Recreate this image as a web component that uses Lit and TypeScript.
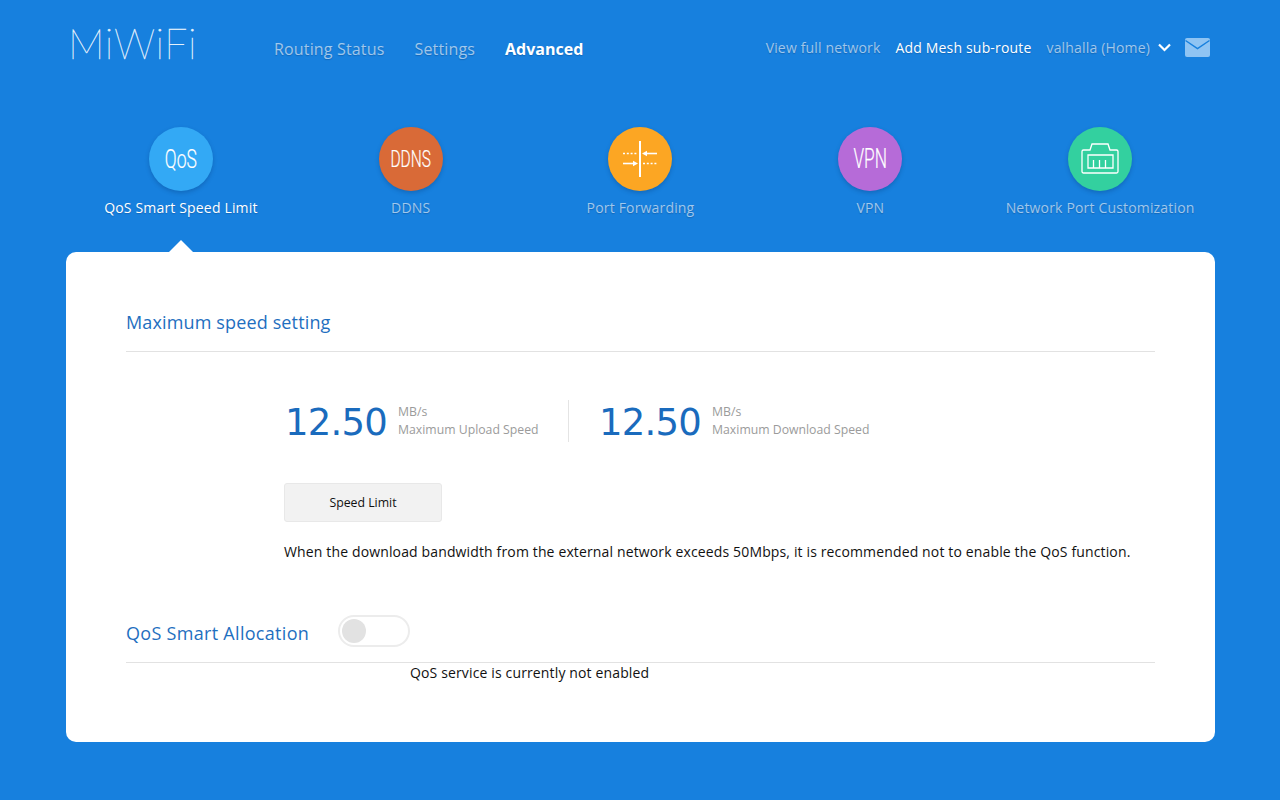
import { LitElement, html, css } from "lit";
import { customElement } from "lit/decorators.js";

const portIcon = html`<svg width="36" height="36" viewBox="0 0 36 36" fill="none" stroke="#fff" stroke-width="1.600">
  <path d="M18 0v36" stroke-width="2" />
  <path d="M1 12.500h15" stroke-dasharray="2 1.800" />
  <path d="M23 12.500h12" />
  <path d="M20 12.500l5-2.800v5.600z" fill="#fff" stroke="none" />
  <path d="M1 22.500h12" />
  <path d="M16 22.500l-5-2.800v5.600z" fill="#fff" stroke="none" />
  <path d="M21 22.500h15" stroke-dasharray="2 1.800" />
</svg>`;

const lanIcon = html`<svg width="38" height="32" viewBox="0 0 38 32" fill="none" stroke="#fff" stroke-width="1.300">
  <path d="M2.500 7h6.500l2-6h16l2 6h6.500a1.500 1.500 0 0 1 1.500 1.500v20a1.500 1.500 0 0 1-1.500 1.500h-33a1.500 1.500 0 0 1-1.500-1.500v-20a1.500 1.500 0 0 1 1.500-1.500z" />
  <path d="M7 12h25v13h-25z" />
  <path d="M12.500 25v-8M18.500 25v-8M24.500 25v-8" />
</svg>`;

const tabs = [
  { label: "QoS Smart Speed Limit", color: "#33a9f5", text: "QoS", active: true },
  { label: "DDNS", color: "#d96a37", text: "DDNS" },
  { label: "Port Forwarding", color: "#fca623", icon: portIcon },
  { label: "VPN", color: "#b66bd8", text: "VPN" },
  { label: "Network Port Customization", color: "#33d09f", icon: lanIcon },
];

@customElement("app-root")
export class AppRoot extends LitElement {
  static styles = css`
    :host {
      display: block;
      height: 800px;
      overflow: hidden;
      background: #1780de;
      font-family: "Open Sans", "Noto Sans", sans-serif;
      font-size: 14px;
      letter-spacing: 0.14px;
      color: #111;
    }
    .wrap {
      width: 1149px;
      margin-left: 66px;
    }
    .header {
      display: flex;
      align-items: center;
      height: 96px;
      padding-left: 5px;
      padding-right: 5px;
      text-shadow: 0 1px 1px rgba(0, 30, 80, 0.25);
    }
    .logo {
      width: 124px;
      font-family: "Lato", sans-serif;
      font-weight: 100;
      font-size: 41px;
      letter-spacing: 0.6px;
      color: #e4f1fc;
      -webkit-text-stroke: 0.35px #e4f1fc;
      text-shadow: none;
      line-height: 1;
      margin-top: -9px;
      margin-left: -3px;
    }
    .nav {
      display: flex;
      gap: 30px;
      margin-left: 82px;
      font-size: 16px;
      letter-spacing: 0.16px;
      color: rgba(255, 255, 255, 0.6);
      margin-top: 2px;
    }
    .nav .on {
      color: #fff;
      font-weight: 700;
      letter-spacing: 0;
    }
    .right {
      margin-left: auto;
      display: flex;
      align-items: center;
      font-size: 14px;
      letter-spacing: 0.17px;
      color: rgba(255, 255, 255, 0.6);
      margin-top: -2px;
    }
    .right .add {
      color: #fff;
      margin-left: 15px;
    }
    .right .home {
      margin-left: 15px;
    }
    .chev {
      margin-left: 8px;
    }
    .mail {
      margin-left: 14px;
    }
    .tabs {
      display: grid;
      grid-template-columns: repeat(5, 1fr);
      margin-top: 31px;
      height: 125px;
    }
    .tab {
      position: relative;
      display: flex;
      flex-direction: column;
      align-items: center;
      font-size: 14px;
      letter-spacing: 0.17px;
      color: rgba(255, 255, 255, 0.6);
      text-shadow: 0 1px 1px rgba(0, 30, 80, 0.25);
    }
    .tab.on {
      color: #fff;
    }
    .tab.on::after {
      content: "";
      position: absolute;
      bottom: 0;
      left: 50%;
      margin-left: -12px;
      border: 12px solid transparent;
      border-top: 0;
      border-bottom-color: #fff;
    }
    .circle {
      width: 64px;
      height: 64px;
      border-radius: 50%;
      display: flex;
      align-items: center;
      justify-content: center;
      box-shadow: 0 2px 4px rgba(0, 40, 90, 0.25);
      color: #fff;
      margin-bottom: 7px;
    }
    .badge {
      font-family: "Roboto", sans-serif;
      font-weight: 300;
      font-size: 25px;
      letter-spacing: 0;
      text-shadow: none;
      -webkit-text-stroke: 0.2px #fff;
      transform: scaleX(0.7);
      white-space: nowrap;
    }
    .badge.b-ddns {
      font-size: 23.5px;
      transform: scaleX(0.66);
    }
    .badge.b-vpn {
      font-size: 27px;
      transform: scaleX(0.64);
    }
    .card {
      background: #fff;
      border-radius: 10px;
      height: 490px;
      padding: 0 60px;
      box-sizing: border-box;
    }
    .title {
      font-size: 18px;
      color: #1f6fc0;
      line-height: 24px;
    }
    .head {
      padding-top: 58px;
      padding-bottom: 17px;
      border-bottom: 1px solid #e2e2e2;
    }
    .body {
      padding-left: 158px;
    }
    .speeds {
      display: flex;
      align-items: center;
      margin-top: 48px;
      height: 42px;
    }
    .speed {
      display: flex;
      align-items: center;
    }
    .num {
      font-family: "DejaVu Sans", sans-serif;
      font-size: 37px;
      letter-spacing: -0.8px;
      color: #1a6bbd;
      line-height: 42px;
      padding-top: 4px;
      margin-left: 1px;
      width: 113px;
    }
    .unit {
      font-size: 12.250px;
      letter-spacing: 0;
      color: #9b9b9b;
      line-height: 18px;
    }
    .sep {
      width: 1px;
      height: 42px;
      background: #e4e4e4;
      margin: 0 29.500px 0 29px;
    }
    .btn {
      display: block;
      width: 158px;
      height: 39px;
      margin-top: 41px;
      border: 1px solid #e8e8e8;
      border-radius: 3px;
      background: #f2f2f2;
      font: inherit;
      font-size: 12.300px;
      letter-spacing: 0;
      color: #111;
    }
    .note {
      margin-top: 20px;
      line-height: 20px;
    }
    .alloc {
      display: flex;
      align-items: center;
      height: 62px;
      margin-top: 38px;
      border-bottom: 1px solid #e2e2e2;
    }
    .alloc .title {
      letter-spacing: 0.3px;
      padding-top: 4px;
    }
    .toggle {
      width: 72px;
      height: 32px;
      box-sizing: border-box;
      border: 2px solid #ececec;
      border-radius: 16px;
      margin-left: 29px;
      padding: 2px;
      background: #fff;
    }
    .toggle span {
      display: block;
      width: 24px;
      height: 24px;
      border-radius: 50%;
      background: #e2e2e2;
    }
    .status {
      padding-left: 284px;
      line-height: 20px;
    }
  `;

  render() {
    return html`
      <div class="wrap">
        <div class="header">
          <div class="logo">MiWiFi</div>
          <div class="nav">
            <span>Routing Status</span>
            <span>Settings</span>
            <span class="on">Advanced</span>
          </div>
          <div class="right">
            <span>View full network</span>
            <span class="add">Add Mesh sub-route</span>
            <span class="home">valhalla (Home)</span>
            <svg class="chev" width="13" height="9" viewBox="0 0 13 9" fill="none" stroke="#fff" stroke-width="2.200">
              <path d="M1 1.500l5.500 5.500 5.500-5.500" />
            </svg>
            <svg class="mail" width="25" height="19" viewBox="0 0 25 19">
              <rect width="25" height="19" rx="2" fill="#8fc4f3" />
              <path d="M0.500 2.500l12 8 12-8" fill="none" stroke="#1780de" stroke-width="1.500" />
            </svg>
          </div>
        </div>
        <div class="tabs">
          ${tabs.map(
            (t) => html`
              <div class="tab ${t.active ? "on" : ""}">
                <div class="circle" style="background:${t.color}">
                  ${t.icon ?? html`<span class="badge b-${t.text?.toLowerCase()}">${t.text}</span>`}
                </div>
                <span>${t.label}</span>
              </div>
            `
          )}
        </div>
        <div class="card">
          <div class="head"><div class="title">Maximum speed setting</div></div>
          <div class="body">
            <div class="speeds">
              <div class="speed">
                <div class="num">12.50</div>
                <div class="unit">MB/s<br />Maximum Upload Speed</div>
              </div>
              <div class="sep"></div>
              <div class="speed">
                <div class="num">12.50</div>
                <div class="unit">MB/s<br />Maximum Download Speed</div>
              </div>
            </div>
            <button class="btn">Speed Limit</button>
            <div class="note">When the download bandwidth from the external network exceeds 50Mbps, it is recommended not to enable the QoS function.</div>
          </div>
          <div class="alloc">
            <div class="title">QoS Smart Allocation</div>
            <div class="toggle"><span></span></div>
          </div>
          <div class="status">QoS service is currently not enabled</div>
        </div>
      </div>
    `;
  }
}
